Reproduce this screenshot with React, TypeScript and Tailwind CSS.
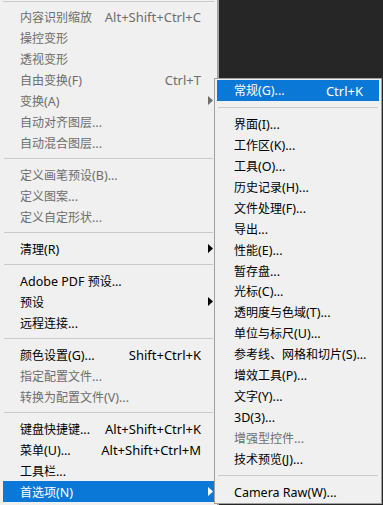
type Item =
  | { sep: true }
  | { sep?: false; label: string; keys?: string; sub?: boolean; off?: boolean; hi?: boolean };

const SEP: Item = { sep: true };

const mainItems: Item[] = [
  { label: '内容识别缩放', keys: 'Alt+Shift+Ctrl+C', off: true },
  { label: '操控变形', off: true },
  { label: '透视变形', off: true },
  { label: '自由变换(F)', keys: 'Ctrl+T', off: true },
  { label: '变换(A)', sub: true, off: true },
  { label: '自动对齐图层...', off: true },
  { label: '自动混合图层...', off: true },
  SEP,
  { label: '定义画笔预设(B)...', off: true },
  { label: '定义图案...', off: true },
  { label: '定义自定形状...', off: true },
  SEP,
  { label: '清理(R)', sub: true },
  SEP,
  { label: 'Adobe PDF 预设...' },
  { label: '预设', sub: true },
  { label: '远程连接...' },
  SEP,
  { label: '颜色设置(G)...', keys: 'Shift+Ctrl+K' },
  { label: '指定配置文件...', off: true },
  { label: '转换为配置文件(V)...', off: true },
  SEP,
  { label: '键盘快捷键...', keys: 'Alt+Shift+Ctrl+K' },
  { label: '菜单(U)...', keys: 'Alt+Shift+Ctrl+M' },
  { label: '工具栏...' },
  { label: '首选项(N)', sub: true, hi: true },
];

const prefItems: Item[] = [
  { label: '常规(G)...', keys: 'Ctrl+K', hi: true },
  SEP,
  { label: '界面(I)...' },
  { label: '工作区(K)...' },
  { label: '工具(O)...' },
  { label: '历史记录(H)...' },
  { label: '文件处理(F)...' },
  { label: '导出...' },
  { label: '性能(E)...' },
  { label: '暂存盘...' },
  { label: '光标(C)...' },
  { label: '透明度与色域(T)...' },
  { label: '单位与标尺(U)...' },
  { label: '参考线、网格和切片(S)...' },
  { label: '增效工具(P)...' },
  { label: '文字(Y)...' },
  { label: '3D(3)...' },
  { label: '增强型控件...', off: true },
  { label: '技术预览(J)...' },
  SEP,
  { label: 'Camera Raw(W)...' },
];

const CJK = /[\u3000-\u303f\u4e00-\u9fff\uff00-\uffef]/;

// CJK runs are set a touch smaller than the latin runs, like YaHei next to Segoe
function MixedText({ text, latin = 'text-[12.5px]' }: { text: string; latin?: string }) {
  const parts = text.split(/([\u3000-\u303f\u4e00-\u9fff\uff00-\uffef]+)/);
  return (
    <>
      {parts.map((p, i) =>
        !p ? null : CJK.test(p) ? (
          <span key={i} className="text-[12px] font-['Noto_Sans_CJK_SC',sans-serif]">
            {p}
          </span>
        ) : (
          <span key={i} className={`${latin} font-['Noto_Sans','Noto_Sans_CJK_SC',sans-serif]`}>
            {p}
          </span>
        )
      )}
    </>
  );
}

function Arrow({ color }: { color: string }) {
  return (
    <svg width="5" height="9" viewBox="0 0 5 9" className="block">
      <polygon points="0,0 5,4.5 0,9" fill={color} />
    </svg>
  );
}

function MenuList({
  items,
  rowH,
  sepClass,
  tailW,
}: {
  items: Item[];
  rowH: string;
  sepClass: string;
  tailW: string;
}) {
  return (
    <>
      {items.map((it, i) => {
        if (it.sep) {
          return (
            <div key={i} className={`${sepClass} flex items-center px-[1px]`}>
              <div className="h-px w-full bg-[#cacaca]" />
            </div>
          );
        }
        const color = it.hi ? 'text-white' : it.off ? 'text-[#6d6d6d]' : 'text-black';
        return (
          <div
            key={i}
            className={`${rowH} flex items-center pl-[17px] leading-[16px] whitespace-nowrap ${color} ${
              it.hi ? 'bg-[#0a78d7]' : ''
            }`}
          >
            <div className="flex-1">
              <MixedText text={it.label} />
            </div>
            {it.keys && (
              <div>
                <MixedText text={it.keys} latin="text-[13px]" />
              </div>
            )}
            <div className={`${tailW} flex justify-end pr-[1px]`}>
              {it.sub && <Arrow color={it.hi ? '#ffffff' : it.off ? '#6d6d6d' : '#000000'} />}
            </div>
          </div>
        );
      })}
    </>
  );
}

export default function App() {
  return (
    <div className="relative flex h-[505px] w-[383px] overflow-hidden bg-[#262626]">
      {/* Edit menu */}
      <div className="flex h-[505px] w-[219px] flex-col border-r-2 border-[#a3a3a3] bg-[#f0f0f0] px-[3px]">
        <div className="h-[6px] pt-[1px]">
          <div className="h-px bg-[#cacaca]" />
        </div>
        <MenuList items={mainItems} rowH="h-[21px]" sepClass="h-[11px]" tailW="w-[13px]" />
      </div>

      {/* Preferences flyout */}
      <div className="absolute left-[214px] top-[78px] flex h-[426px] w-[168px] flex-col overflow-hidden border border-[#a0a0a0] bg-[#f0f0f0] px-[2px] pt-[1px]">
        <MenuList items={prefItems} rowH="h-[20.9px]" sepClass="h-[13px]" tailW="w-[16px]" />
      </div>
    </div>
  );
}
